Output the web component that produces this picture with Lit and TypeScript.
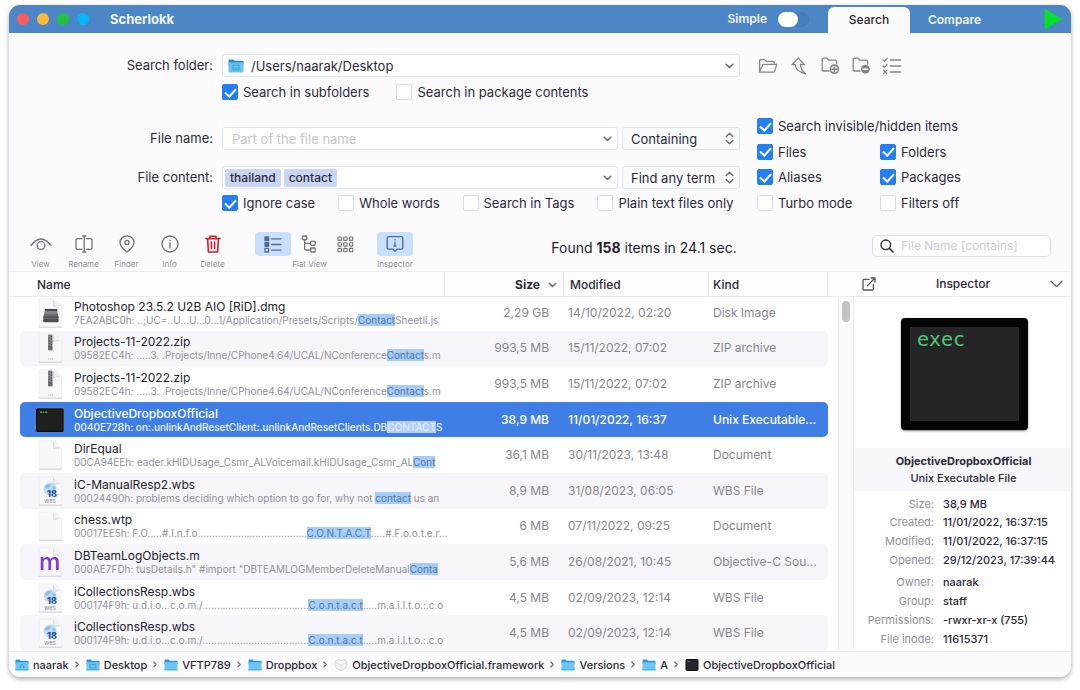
import { LitElement, html, css, svg, nothing, type TemplateResult } from "lit";
import { customElement } from "lit/decorators.js";
import { classMap } from "lit/directives/class-map.js";

interface FileRow {
  icon: "dmg" | "zip" | "exec" | "doc" | "wbs" | "objc";
  name: string;
  before: string;
  hit: string;
  after: string;
  size: string;
  modified: string;
  kind: string;
  selected?: boolean;
}

const FILES: FileRow[] = [
  { icon: "dmg", name: "Photoshop 23.5.2 U2B AIO [RiD].dmg", before: "7EA2ABC0h: ..;UC=..U...U...0...1/Application/Presets/Scripts/", hit: "Contact", after: "SheetII.js", size: "2,29 GB", modified: "14/10/2022, 02:20", kind: "Disk Image" },
  { icon: "zip", name: "Projects-11-2022.zip", before: "09582EC4h: .....3. .Projects/Inne/CPhone4.64/UCAL/NConference", hit: "Contact", after: "s.m", size: "993,5 MB", modified: "15/11/2022, 07:02", kind: "ZIP archive" },
  { icon: "zip", name: "Projects-11-2022.zip", before: "09582EC4h: .....3. .Projects/Inne/CPhone4.64/UCAL/NConference", hit: "Contact", after: "s.m", size: "993,5 MB", modified: "15/11/2022, 07:02", kind: "ZIP archive" },
  { icon: "exec", name: "ObjectiveDropboxOfficial", before: "0040E728h: on:.unlinkAndResetClient:.unlinkAndResetClients.DB", hit: "CONTACT", after: "S", size: "38,9 MB", modified: "11/01/2022, 16:37", kind: "Unix Executable...", selected: true },
  { icon: "doc", name: "DirEqual", before: "00CA94EEh: eader.kHIDUsage_Csmr_ALVoicemail.kHIDUsage_Csmr_AL", hit: "Cont", after: "", size: "36,1 MB", modified: "30/11/2023, 13:48", kind: "Document" },
  { icon: "wbs", name: "iC-ManualResp2.wbs", before: "00024490h: problems deciding which option to go for, why not ", hit: "contact", after: " us an", size: "8,9 MB", modified: "31/08/2023, 06:05", kind: "WBS File" },
  { icon: "doc", name: "chess.wtp", before: "00017EE5h: F.O.....#.I.n.f.o......................................", hit: "C.O.N.T.A.C.T", after: ".....#.F.o.o.t.e.r...", size: "6 MB", modified: "07/11/2022, 09:25", kind: "Document" },
  { icon: "objc", name: "DBTeamLogObjects.m", before: "000AE7FDh: tusDetails.h\" #import \"DBTEAMLOGMemberDeleteManual", hit: "Conta", after: "", size: "5,6 MB", modified: "26/08/2021, 10:45", kind: "Objective-C Sou..." },
  { icon: "wbs", name: "iCollectionsResp.wbs", before: "000174F9h: u.d.i.o...c.o.m./.....................................", hit: "C.o.n.t.a.c.t", after: ".....m.a.i.l.t.o.:.c.o", size: "4,5 MB", modified: "02/09/2023, 12:14", kind: "WBS File" },
  { icon: "wbs", name: "iCollectionsResp.wbs", before: "000174F9h: u.d.i.o...c.o.m./.....................................", hit: "C.o.n.t.a.c.t", after: ".....m.a.i.l.t.o.:.c.o", size: "4,5 MB", modified: "02/09/2023, 12:14", kind: "WBS File" },
];

const DETAILS: [string, string][][] = [
  [["Size:", "38,9 MB"]],
  [["Created:", "11/01/2022, 16:37:15"], ["Modified:", "11/01/2022, 16:37:15"], ["Opened:", "29/12/2023, 17:39:44"]],
  [["Owner:", "naarak"], ["Group:", "staff"], ["Permissions:", "-rwxr-xr-x (755)"], ["File inode:", "11615371"]],
];

const CRUMBS: [string, string][] = [
  ["home", "naarak"],
  ["desk", "Desktop"],
  ["folder", "VFTP789"],
  ["folder", "Droppbox"],
  ["framework", "ObjectiveDropboxOfficial.framework"],
  ["folder", "Versions"],
  ["folder", "A"],
  ["exec", "ObjectiveDropboxOfficial"],
];

const icon = (w: number, h: number, body: unknown, cls = "") =>
  html`<svg class=${cls} width=${w} height=${h} viewBox="0 0 ${w} ${h}" fill="none" stroke="currentColor" stroke-width="1.3" stroke-linecap="round" stroke-linejoin="round" aria-hidden="true">${body}</svg>`;

const chevron = () => icon(9, 6, svg`<path stroke-width="1.5" d="M1.2 1.2L4.5 4.5L7.8 1.2"/>`, "chev");
const updown = () => icon(9, 13, svg`<path stroke-width="1.4" d="M1.2 4.4L4.5 1.2L7.8 4.4M1.2 8.6L4.5 11.8L7.8 8.6"/>`, "chev");

const folderGlyph = (mark: string) => icon(14, 12, svg`
  <path d="M.5 1.2Q.5.5 1.2.5H4.6L5.8 1.7H12.8Q13.5 1.7 13.5 2.4V5H.5Z" fill="#2f95cb" stroke="none"/>
  <path d="M.5 3.2H13.5V10.8Q13.5 11.5 12.8 11.5H1.2Q.5 11.5.5 10.8Z" fill="#6cc6f3" stroke="none"/>
  <path d="M.5 10.7H13.5" stroke="#45a9dd" stroke-width=".8"/>
  ${mark === "home" ? svg`<path d="M5.3 9V6.8L7 5.4L8.7 6.8V9" stroke="#3596c9" stroke-width=".9"/>` : nothing}
  ${mark === "desk" ? svg`<rect x="4.3" y="5.4" width="5.4" height="3.6" stroke="#3596c9" stroke-width=".8"/>` : nothing}`);

const crumbGlyph = (kind: string) => {
  if (kind === "framework")
    return icon(14, 12, svg`<path d="M2 1.6L5 .6L7 1.5L9 .6L12 1.6L13.2 5.5L11.4 9.4L7 11.6L2.6 9.4L.8 5.5Z" fill="#f6f4f7" stroke="#cfcdd4" stroke-width=".8"/><path d="M2 3.6L7 6L12 3.6M7 6V11" stroke="#d8d6dc" stroke-width=".7"/>`);
  if (kind === "exec")
    return icon(14, 12, svg`<rect x="1" y=".5" width="12" height="11" rx=".8" fill="#26252b" stroke="#101014" stroke-width="1"/><path d="M2.6 2.6H5" stroke="#5d7a64" stroke-width=".8"/>`);
  return folderGlyph(kind);
};

const sheet = (body: unknown) => icon(28, 30, svg`
  <path d="M3.5 1H19L25.5 7.5V29H3.5Z" fill="#f8f8f9" stroke="#eeedf0" stroke-width=".8"/>
  <path d="M3.5 29.2H25.5" stroke="#cfced3" stroke-width=".9"/>
  <path d="M17.5 1.2Q18.4 4.6 17.6 8.4Q21.5 7.4 25.3 8.2Z" fill="#f1f1f3" stroke="none"/>
  <path d="M17.5 2.4Q18.2 5 17.6 8.4Q20.5 7.6 23 7.8" stroke="#cfced3" stroke-width=".8"/>
  ${body}`);

const fileGlyph = (kind: FileRow["icon"]) => {
  switch (kind) {
    case "dmg":
      return sheet(svg`<path d="M9 11H21L22.4 19H7.4Z" fill="#858588" stroke="none"/><path d="M9 11H21L21.3 12.8H8.7Z" fill="#3f3f43" stroke="none"/><path d="M8 16H22L22.4 19H7.4Z" fill="#6c6c70" stroke="none"/><rect x="7.2" y="18.6" width="15.4" height="5.6" rx="1" fill="#4e4e52" stroke="none"/><path d="M8 20.6H22" stroke="#7f7f83" stroke-width=".7"/>`);
    case "zip":
      return sheet(svg`<rect x="12" y="1.4" width="4.6" height="16" rx="1" fill="#8a8a8e" stroke="none"/><path d="M13.2 2V14M15.4 3V14" stroke="#4c4c50" stroke-width="1" stroke-dasharray="1.3 1.3" stroke-linecap="butt"/><rect x="12.4" y="13" width="3.8" height="4" rx=".6" fill="#66666a" stroke="none"/><path d="M12 26H17" stroke="#b5b4b8" stroke-width=".9" stroke-dasharray="1.4 .5" stroke-linecap="butt"/>`);
    case "exec":
      return icon(28, 26, svg`<rect x=".7" y="1.7" width="26.6" height="22.6" rx=".8" fill="#1f1f20" stroke="#0c0b0b" stroke-width="1.4"/><path d="M.4 1.2H27.6M27.8 1.4V24.6" stroke="#a98d74" stroke-width=".5"/><path d="M4 5.2H12" stroke="#3f9d58" stroke-width="1.5" stroke-dasharray="2 .5" stroke-linecap="butt"/>`);
    case "wbs":
      return sheet(svg`<circle cx="14" cy="13" r="6.4" fill="#bddaf4" stroke="none"/><path d="M9 10.5Q12 7 15 8.4Q14 11.5 10.4 12.4ZM16.4 9.6Q19 10.6 19.6 13H17Z" fill="#85b9e8" stroke="none"/><text x="16" y="20.5" text-anchor="middle" class="g18">18</text><text x="14" y="27.4" text-anchor="middle" class="gwbs">WBS</text>`);
    case "objc":
      return sheet(svg`<text x="13.6" y="22.5" text-anchor="middle" class="gm">m</text>`);
    default:
      return sheet(nothing);
  }
};

@customElement("app-root")
export class AppRoot extends LitElement {
  static styles = css`
    :host { display: block; min-height: 100vh; background: #fefefe; font-family: Inter, "Liberation Sans", sans-serif; font-size: 13px; line-height: 16px; color: #2c2b36; }
    * { box-sizing: border-box; }
    button, input, select { font: inherit; color: inherit; margin: 0; padding: 0; border: 0; background: none; outline: none; }
    svg { display: block; flex: none; }
    .frame { padding: 5px 9px 13px; height: 100vh; }
    .window { height: 100%; display: flex; flex-direction: column; background: #fbfaff; border-radius: 11px; overflow: hidden; box-shadow: 0 2px 5px rgba(0, 0, 0, .32); }

    .titlebar { height: 28px; flex: none; display: flex; align-items: center; background: #4c86c6; color: #f2f7fd; padding: 0 8px; font-weight: 600; }
    .lights { display: flex; gap: 8px; margin-right: 21px; }
    .light { width: 12px; height: 12px; border-radius: 50%; }
    .red { background: #fb5b5d; } .amber { background: #fdb93c; } .green { background: #26bf3b; } .cyan { background: #06b5f7; }
    .app { flex: 1; margin: 0; font-size: 13px; font-weight: 700; }
    .simple { display: flex; align-items: center; gap: 11px; font-size: 12px; margin-right: 19px; }
    .switch { appearance: none; width: 31px; height: 15px; border-radius: 8px; background: #437dbd; display: block; }
    .switch::before { content: ""; display: block; width: 20px; height: 15px; border-radius: 8px; background: #fff; }
    .tabs { display: flex; align-self: stretch; padding-top: 2px; margin-right: 45px; }
    .tab { width: 82px; font-size: 12px; font-weight: 600; border-radius: 6px 6px 0 0; }
    .tab.on { background: #fbfaff; color: #2c2b36; font-weight: 500; }
    .tab.wide { width: 89px; }

    .form { flex: none; padding: 21px 0 20px; display: grid; grid-template-columns: 204px 1fr 314px; row-gap: 18px; }
    .captions { display: flex; flex-direction: column; text-align: right; padding-right: 0; }
    .captions label { line-height: 23px; }
    .fields { display: flex; flex-direction: column; padding: 0 17px 0 9px; }
    .lower { padding-top: 9px; }
    .captions.lower { gap: 16px; }
    .pair { display: flex; gap: 4px; }
    .pair + .pair { margin-top: 16px; }
    .combo { flex: 1; min-width: 0; height: 23px; display: flex; align-items: center; background: #fefeff; border: 1px solid #dfe5f3; border-radius: 3px; padding: 0 5px 0 2px; }
    .combo input { flex: 1; min-width: 0; }
    .combo ::placeholder { color: #c6c4cc; opacity: 1; }
    .combo .lead { padding-left: 7px; }
    .combo button { height: 20px; display: flex; align-items: center; }
    .place { margin: 0 7px 0 3px; }
    .chev { color: #6d6c75; }
    .token { background: #c9d5f5; border-radius: 2px; font-size: 12px; line-height: 18px; padding: 0 5px; margin-right: 3px; font-weight: 500; }
    .pick { position: relative; width: 118px; display: flex; align-items: center; border: 1px solid #dfe5f3; border-radius: 3px; background: #fafbff; }
    .pick select { appearance: none; width: 100%; height: 21px; padding-left: 8px; }
    .pick svg { position: absolute; right: 5px; pointer-events: none; }
    .checks { display: flex; margin-top: 7px; }
    .lower .checks { margin-top: 6px; }
    .check { display: flex; align-items: center; gap: 5px; height: 16px; white-space: nowrap; }
    .check input { appearance: none; flex: none; width: 16px; height: 16px; border: 1px solid #d5dcec; border-radius: 2px; background: #fefeff; display: grid; place-items: center; }
    .check input:checked { background: #2380f3; border-color: #2380f3; }
    .check input:checked::before { content: ""; width: 5px; height: 9px; border: solid #fff; border-width: 0 2px 2px 0; transform: translateY(-1px) rotate(42deg); }
    .checks.spread { gap: 27px; }
    .checks.opts { gap: 23px; }
    .filters { display: grid; grid-template-columns: 123px 1fr; align-content: space-between; }
    .filters .span { grid-column: 1 / -1; }
    .tools { display: flex; align-items: center; gap: 9px; height: 23px; color: #85848d; }
    .tools button { width: 22px; display: flex; justify-content: center; }

    .toolbar { flex: none; height: 41px; display: flex; align-items: flex-start; padding: 1px 20px 0 10px; border-bottom: 1px solid #ebe9f2; color: #6f6e79; }
    .act { width: 43px; display: flex; flex-direction: column; align-items: center; }
    .cap { font-size: 8px; line-height: 10px; color: #93929b; margin-top: 3px; text-align: center; white-space: nowrap; }
    .face { height: 24px; display: grid; place-items: center; }
    .danger { color: #cf1f2a; }
    .views { margin-left: 21px; width: 109px; }
    .seg { display: flex; }
    .seg button { flex: 1; height: 24px; display: grid; place-items: center; border-radius: 4px; }
    .seg .on { background: #c9dffb; color: #4f6c91; }
    .insp { margin-left: 13px; width: 36px; }
    .found { flex: 1; text-align: center; margin: 0; padding-left: 3px; font-size: 14px; line-height: 32px; color: #23222c; }
    .filter { width: 179px; height: 22px; margin-top: 3px; display: flex; align-items: center; gap: 7px; padding: 0 7px; background: #fefeff; border: 1px solid #dcdbf0; border-radius: 5px; color: #33323c; }
    .filter input { flex: 1; min-width: 0; font-size: 12px; }
    .filter ::placeholder { color: #cfccd3; opacity: 1; }

    .main { flex: 1; min-height: 0; display: flex; background: #fefeff; }
    .list { flex: 1; min-width: 0; display: flex; flex-direction: column; border-collapse: collapse; }
    .list thead { display: block; flex: none; background: #fdfcff; border-bottom: 1px solid #ebe9f2; position: relative; z-index: 1; }
    .list tbody { flex: 1; min-height: 0; margin-top: -2px; display: grid; grid-auto-rows: 1fr; padding: 0 26px 0 11px; }
    .list tr { display: grid; grid-template-columns: 1fr 115px 145px 119px; align-items: center; border-radius: 5px; min-height: 0; }
    .list thead tr { height: 24px; margin: 0 26px 0 11px; font-size: 12px; align-items: stretch; }
    .list th { font-weight: 500; text-align: left; padding: 0; line-height: 25px; border-right: 1px solid #e6e4ee; }
    .list .hname { padding-left: 17px; margin-right: 4px; }
    .list .hsize { display: flex; align-items: center; justify-content: flex-end; gap: 8px; padding-right: 6px; font-weight: 700; }
    .list .hmod { padding-left: 6px; }
    .list .hkind, .list .kind, .list .mod { padding-left: 4px; }
    .list td { padding: 0; font-size: 12px; color: #87868d; white-space: nowrap; }
    .list tbody tr:nth-child(even) { background: #f6f5f9; }
    .list tbody tr.selected { background: #3f7fe5; }
    .list .selected td { color: #fff; font-weight: 500; }
    .list .size { text-align: right; padding-right: 15px; }
    .list .file { display: flex; align-items: center; gap: 10px; padding-left: 16px; min-width: 0; overflow: hidden; }
    .words { flex: 1; min-width: 0; }
    .name { font-size: 12px; line-height: 15px; color: #24232d; }
    .selected .name { color: #fff; }
    .snip { font-size: 10px; line-height: 13px; color: #929198; overflow: hidden; }
    .selected .snip { color: #f0f5fd; font-weight: 500; }
    mark { background: #a6cdf5; color: #5277a3; }
    .selected mark { background: #b7d0f6; color: #dce8fb; }
    .g18 { font: 800 9px Inter, sans-serif; fill: #1f4f96; stroke: none; }
    .gwbs { font: 500 5px Inter, sans-serif; fill: #8c96a6; stroke: none; }
    .gm { font: 500 24px Inter, sans-serif; fill: #8333cf; stroke: none; }
    .table { flex: 1; min-width: 0; display: flex; position: relative; }
    .bar { position: absolute; right: 0; top: 25px; bottom: 0; width: 16px; background: #faf9fc; border-left: 1px solid #ebeaef; border-right: 1px solid #ebeaef; padding: 4px 3px; }
    .thumb { width: 8px; height: 21px; border-radius: 4px; background: #c2c1c4; }

    .inspector { width: 217px; flex: none; display: flex; flex-direction: column; }
    .ihead { height: 25px; flex: none; display: flex; align-items: center; justify-content: space-between; padding: 0 8px 0 8px; background: #fdfcff; border-bottom: 1px solid #ebe9f2; font-size: 12px; font-weight: 500; }
    .ihead h2 { font: inherit; margin: 0; }
    .ihead button { display: grid; place-items: center; color: #55545e; }
    .preview { height: 151px; flex: none; display: grid; place-items: center; padding: 2px 0 0 4px; }
    .term { width: 127px; height: 112px; background: #252527; border: 9px solid #050506; border-radius: 4px; color: #4ecb71; font: 20px/24px "DejaVu Sans Mono", monospace; padding: 0 7px; box-shadow: 0 1px 2px rgba(0, 0, 0, .5); }
    .ident { height: 43px; flex: none; background: #f7f6fa; text-align: center; font-size: 11px; line-height: 17px; padding: 5px 0 0 2px; font-weight: 500; }
    .ident strong { display: block; font-weight: 700; }
    .facts { margin: 0; padding-top: 5px; font-size: 11px; line-height: 19px; }
    .fact { display: grid; grid-template-columns: 80px 1fr; column-gap: 9px; }
    .first { line-height: 17px; }
    .last { padding-top: 3px; }
    .facts dt { text-align: right; color: #908f97; }
    .facts dd { margin: 0; font-weight: 500; white-space: nowrap; }

    .crumbs { height: 26px; flex: none; display: flex; align-items: center; padding: 0 6px; border-top: 1px solid #eeecf3; font-size: 11px; font-weight: 500; }
    .crumbs a { display: flex; align-items: center; gap: 4px; color: inherit; text-decoration: none; white-space: nowrap; }
    .sep { margin: 0 7px 0 6px; color: #67666f; }
  `;

  private check(label: string, on: boolean, cls = "") {
    return html`<label class="check ${cls}"><input type="checkbox" .checked=${on}>${label}</label>`;
  }

  private action(label: string, art: TemplateResult, cls = "") {
    return html`<button class="act ${cls}"><span class="face">${art}</span><span class="cap">${label}</span></button>`;
  }

  private titlebar() {
    return html`<header class="titlebar">
      <div class="lights"><span class="light red"></span><span class="light amber"></span><span class="light green"></span><span class="light cyan"></span></div>
      <h1 class="app">Scherlokk</h1>
      <label class="simple">Simple<input class="switch" type="checkbox"></label>
      <nav class="tabs"><button class="tab on">Search</button><button class="tab wide">Compare</button></nav>
      <button aria-label="Start search">${icon(19, 22, svg`<path d="M.5 .5L18.5 11L.5 21.5Z" fill="#06df2b" stroke="none"/>`)}</button>
    </header>`;
  }

  private form() {
    const folder = "M2.2 14.2V3.4Q2.2 2.2 3.4 2.2H7L8.8 4.2H15.4Q16.6 4.2 16.6 5.4V8";
    return html`<section class="form">
      <div class="captions"><label for="folder">Search folder:</label></div>
      <div class="fields">
        <div class="pair"><div class="combo">
          <svg class="place" width="16" height="14" viewBox="0 0 16 14" aria-hidden="true"><path d="M.5 1.2Q.5.4 1.3.4H5.4L6.8 1.8H14.7Q15.5 1.8 15.5 2.6V6H.5Z" fill="#2a8fc7"/><path d="M.5 3.6H15.5V12.8Q15.5 13.6 14.7 13.6H1.3Q.5 13.6.5 12.8Z" fill="#6ac3ef"/><rect x="5" y="6.2" width="6" height="4.6" fill="none" stroke="#3b9dce" stroke-width=".9"/><path d="M6.5 9.2H9.5" stroke="#3b9dce" stroke-width=".8"/></svg>
          <input id="folder" .value=${"/Users/naarak/Desktop"}><button aria-label="Recent folders">${chevron()}</button>
        </div></div>
        <div class="checks spread">${this.check("Search in subfolders", true)}${this.check("Search in package contents", false)}</div>
      </div>
      <div class="tools">
        <button aria-label="Open folder">${icon(20, 16, svg`<path d="M1.6 14V2.8Q1.6 1.6 2.8 1.6H6.6L8.4 3.4H15Q16.2 3.4 16.2 4.6V6.4M1.6 14L4.4 7.4Q4.8 6.4 5.8 6.4H18.8L16.6 13.2Q16.3 14.2 15.2 14.2H2.2Q1.6 14.2 1.6 14"/>`)}</button>
        <button aria-label="Parent folder">${icon(18, 18, svg`<path d="M8.2 1L2 7.6L5.2 7.4Q4.8 13.8 15.6 16.8Q10.6 12.6 10.4 7.4L14.4 7.6Z"/>`)}</button>
        <button aria-label="Add folder">${icon(20, 19, svg`<path d="${folder}M2.2 14.2Q2.2 15 3 15H9"/><circle cx="14.4" cy="13.2" r="4" fill="#fbfaff" stroke-width="1.7"/><path stroke-width="1.6" d="M14.4 11V15.4M12.2 13.2H16.6"/>`)}</button>
        <button aria-label="Exclude folder">${icon(20, 19, svg`<path d="${folder}M2.2 14.2Q2.2 15 3 15H9"/><circle cx="14.4" cy="13.2" r="4.4" fill="currentColor" stroke="none"/><path stroke="#fbfaff" stroke-width="1.6" d="M12.2 13.2H16.6"/>`)}</button>
        <button aria-label="Filter list">${icon(20, 18, svg`<path stroke-width="1.5" d="M8.4 3H18.6M8.4 9H18.6M8.4 15H18.6"/><path stroke-width="1.2" d="M1 3L2.6 4.4L5.4 1.2M1 9L2.6 10.4L5.4 7.2M1.6 13.2L5 16.6M5 13.2L1.6 16.6"/>`)}</button>
      </div>

      <div class="captions lower"><label for="fname">File name:</label><label for="content">File content:</label></div>
      <div class="fields lower">
        <div class="pair">
          <div class="combo"><input id="fname" class="lead" placeholder="Part of the file name"><button aria-label="Recent names">${chevron()}</button></div>
          <div class="pick"><select aria-label="Name rule"><option>Containing</option></select>${updown()}</div>
        </div>
        <div class="pair">
          <div class="combo"><span class="token">thailand</span><span class="token">contact</span><input id="content"><button aria-label="Recent terms">${chevron()}</button></div>
          <div class="pick"><select aria-label="Content rule"><option>Find any term</option></select>${updown()}</div>
        </div>
        <div class="checks opts">${this.check("Ignore case", true)}${this.check("Whole words", false)}${this.check("Search in Tags", false)}${this.check("Plain text files only", false)}</div>
      </div>
      <div class="filters">
        ${this.check("Search invisible/hidden items", true, "span")}
        ${this.check("Files", true)}${this.check("Folders", true)}
        ${this.check("Aliases", true)}${this.check("Packages", true)}
        ${this.check("Turbo mode", false)}${this.check("Filters off", false)}
      </div>
    </section>`;
  }

  private toolbar() {
    const cells = [0, 1, 2].flatMap((r) => [0, 1, 2].map((c) => svg`<rect x=${1 + c * 5.7} y=${1 + r * 5.7} width="3.4" height="3.4" rx=".8" stroke-width="1.1"/>`));
    return html`<section class="toolbar">
      ${this.action("View", icon(22, 14, svg`<path d="M1 8.4Q11-4.4 21 8.4"/><circle cx="11" cy="8.6" r="3.9"/>`))}
      ${this.action("Rename", icon(18, 18, svg`<path d="M7 3.6H2.4Q1 3.6 1 5V13Q1 14.4 2.4 14.4H7M11.4 3.6H15.6Q17 3.6 17 5V13Q17 14.4 15.6 14.4H11.4M9.2 1V17M7.6 1H10.8M7.6 17H10.8"/>`))}
      ${this.action("Finder", icon(16, 18, svg`<path d="M8 17Q1 11.6 1 7.4A7 6.6 0 0 1 15 7.4Q15 11.6 8 17Z"/><circle cx="8" cy="7.4" r="2"/>`))}
      ${this.action("Info", icon(18, 18, svg`<circle cx="9" cy="9" r="8"/><path d="M9 8V13M9 5.2V5.4"/>`))}
      ${this.action("Delete", icon(16, 18, svg`<path stroke-width="1.6" d="M1 3.6H15M5 3.4V1.2H11V3.4M2.6 3.8L3.4 17H12.6L13.4 3.8M6.4 7V13.6M9.6 7V13.6"/>`), "danger")}
      <div class="views">
        <div class="seg">
          <button class="on" aria-label="Flat list">${icon(18, 17, svg`<rect x="1" y="1" width="3.6" height="3.6" fill="currentColor"/><rect x="1" y="6.7" width="3.6" height="3.6" fill="currentColor"/><rect x="1" y="12.4" width="3.6" height="3.6"/><path d="M7.6 2.8H17M7.6 8.5H17M7.6 14.2H17"/>`)}</button>
          <button aria-label="Tree">${icon(16, 18, svg`<rect x="1.4" y="1" width="4.4" height="3.6" rx=".8"/><rect x="9.6" y="6.4" width="4.6" height="4" rx=".8"/><rect x="9.6" y="13" width="4.6" height="4" rx=".8"/><path d="M3.6 4.6V13.6Q3.6 15 5 15H9.6M3.6 8.4H9.6"/>`)}</button>
          <button aria-label="Grid">${icon(17, 17, cells)}</button>
        </div>
        <div class="cap">Flat View</div>
      </div>
      <div class="insp">
        <div class="seg"><button class="on" aria-label="Inspector">${icon(18, 18, svg`<path d="M2.6 1.6H15.4Q16.8 1.6 16.8 3V12.8Q16.8 14.2 15.4 14.2H11L9 16.4L7 14.2H2.6Q1.2 14.2 1.2 12.8V3Q1.2 1.6 2.6 1.6Z"/><path d="M9 7.2V11M9 4.6V4.8M8 11H10"/>`)}</button></div>
        <div class="cap">Inspector</div>
      </div>
      <p class="found">Found <b>158</b> items in 24.1 sec.</p>
      <label class="filter">${icon(14, 14, svg`<circle cx="5.8" cy="5.8" r="4.8" stroke-width="1.4"/><path stroke-width="1.6" d="M9.4 9.4L13 13"/>`)}<input aria-label="Filter results" placeholder="File Name [contains]"></label>
    </section>`;
  }

  private table() {
    return html`<div class="table">
      <table class="list">
        <thead><tr><th class="hname">Name</th><th class="hsize">Size ${chevron()}</th><th class="hmod">Modified</th><th class="hkind">Kind</th></tr></thead>
        <tbody>${FILES.map((f) => html`<tr class=${classMap({ selected: !!f.selected })}>
          <td class="file">${fileGlyph(f.icon)}<div class="words"><div class="name">${f.name}</div><div class="snip">${f.before}<mark>${f.hit}</mark>${f.after}</div></div></td>
          <td class="size">${f.size}</td><td class="mod">${f.modified}</td><td class="kind">${f.kind}</td></tr>`)}</tbody>
      </table>
      <div class="bar"><div class="thumb"></div></div>
    </div>`;
  }

  private inspector() {
    return html`<aside class="inspector">
      <div class="ihead">
        <button aria-label="Detach">${icon(14, 14, svg`<path d="M7 2.4H2Q1 2.4 1 3.4V12Q1 13 2 13H10.4Q11.4 13 11.4 12V7.4M5.4 8.6L13 1M9 1H13V5"/>`)}</button>
        <h2>Inspector</h2>
        <button aria-label="Collapse">${icon(13, 8, svg`<path d="M1 1.2L6.5 6.6L12 1.2"/>`)}</button>
      </div>
      <div class="preview"><div class="term">exec</div></div>
      <div class="ident"><strong>ObjectiveDropboxOfficial</strong>Unix Executable File</div>
      <dl class="facts">${DETAILS.map((g, i) => html`<div class=${classMap({ first: i === 0, last: i === 2 })}>${g.map(([k, v]) => html`<div class="fact"><dt>${k}</dt><dd>${v}</dd></div>`)}</div>`)}</dl>
    </aside>`;
  }

  render() {
    return html`<div class="frame"><main class="window">
      ${this.titlebar()}${this.form()}${this.toolbar()}
      <div class="main">${this.table()}${this.inspector()}</div>
      <nav class="crumbs">${CRUMBS.map(([k, t], i) => html`${i ? html`<span class="sep">${icon(4, 7, svg`<path stroke-width="1.1" d="M.8 1L3.2 3.5L.8 6"/>`)}</span>` : nothing}<a href="#">${crumbGlyph(k)}${t}</a>`)}</nav>
    </main></div>`;
  }
}
